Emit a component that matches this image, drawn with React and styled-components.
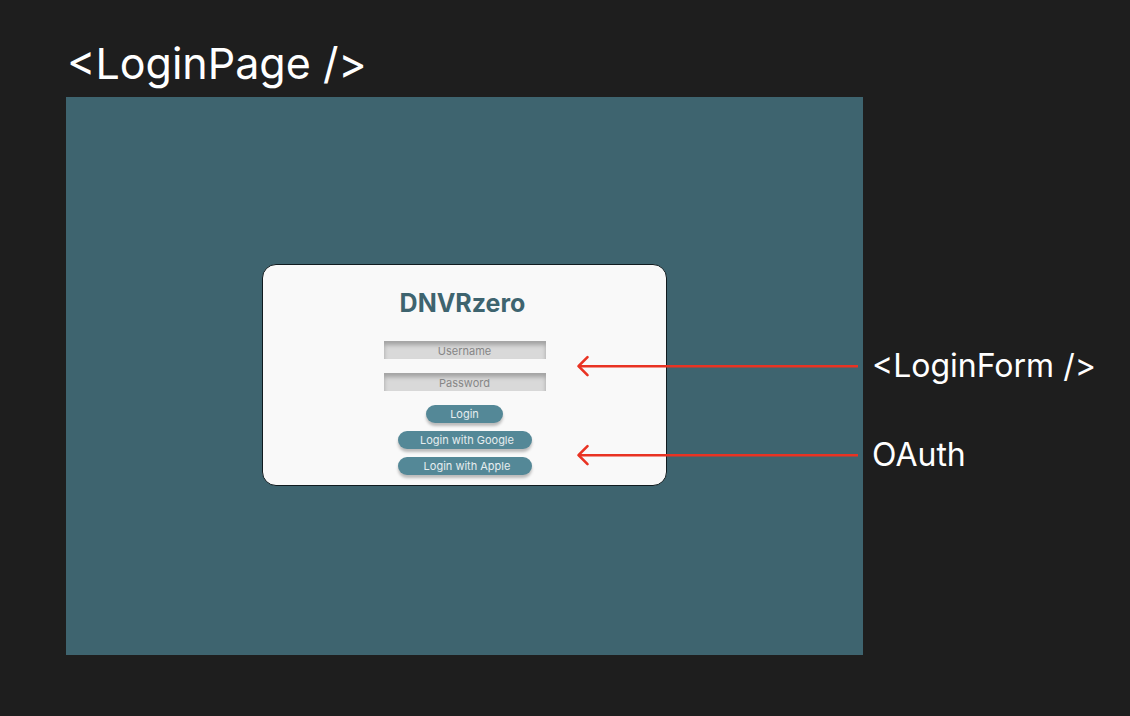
import React from "react";
import styled, { createGlobalStyle } from "styled-components";

const GlobalStyle = createGlobalStyle`
  *, *::before, *::after { box-sizing: border-box; }
  body {
    margin: 0;
    background: #1e1e1e;
    font-family: Inter, "Liberation Sans", sans-serif;
  }
`;

const Board = styled.main`
  min-height: 100vh;
  padding: 36px 0 60px 66px;
  color: #ffffff;
`;

const BoardTitle = styled.h1`
  margin: 0;
  height: 61px;
  padding-left: 1px;
  font-size: 43px;
  line-height: 55px;
  font-weight: 400;
  white-space: nowrap;
`;

const Columns = styled.div`
  display: grid;
  grid-template-columns: minmax(0, 1fr) 267px;
`;

const Frame = styled.section`
  display: flex;
  align-items: center;
  justify-content: center;
  min-height: 558px;
  padding-bottom: 2px;
  background: #3e646f;
`;

const Card = styled.div`
  display: flex;
  flex-direction: column;
  align-items: center;
  width: 405px;
  max-width: 100%;
  padding: 22px 0 10px;
  border: 1px solid #101b1f;
  border-radius: 14px;
  background: #f9f9f9;
`;

const Brand = styled.h2`
  margin: 0 0 22px;
  padding-right: 4px;
  color: #3e646f;
  font-size: 25px;
  line-height: 32px;
  font-weight: 700;
`;

const Form = styled.form`
  display: flex;
  flex-direction: column;
  align-items: center;
  gap: 14px;
`;

const Field = styled.input`
  width: 162px;
  height: 18px;
  padding: 1px 0 0;
  border: 0;
  background: #d9d9d9;
  box-shadow: inset 0 4px 4px rgba(0, 0, 0, 0.25);
  color: #555555;
  font-family: inherit;
  font-size: 11px;
  text-align: center;

  &::placeholder {
    color: #868686;
    opacity: 1;
  }
`;

const PillButton = styled.button`
  width: ${({ $wide }) => ($wide ? "134px" : "77px")};
  height: 18px;
  padding: 0 0 0 ${({ $wide }) => ($wide ? "5px" : "0")};
  border: 0;
  border-radius: 9px;
  background: #548897;
  box-shadow: 0 3px 3px rgba(0, 0, 0, 0.25);
  color: #e6edef;
  font-family: inherit;
  font-size: 11px;
  line-height: 18px;
  text-align: center;
  white-space: nowrap;
  cursor: pointer;
`;

const OAuthGroup = styled.div`
  display: flex;
  flex-direction: column;
  gap: 8px;
  margin-top: 8px;
`;

const Notes = styled.aside`
  display: flex;
  flex-direction: column;
  justify-content: center;
  gap: 49px;
  padding: 68px 0 0 9px;
`;

const Note = styled.p`
  position: relative;
  margin: 0;
  font-size: 32px;
  line-height: 40px;
  white-space: nowrap;
`;

const Arrow = styled.svg`
  position: absolute;
  top: 9px;
  right: 100%;
  width: 282px;
  height: 22px;
  margin-right: 13px;
  overflow: visible;
`;

function Annotation({ children }) {
  return (
    <Note>
      <Arrow viewBox="0 0 282 22" fill="none" stroke="#e93323" aria-hidden="true">
        <path d="M1.5 11.2H281" strokeWidth="2.6" />
        <path d="M10.5 2.2L1.5 11.2L10.5 20.2" strokeWidth="2.6" strokeLinecap="round" strokeLinejoin="round" />
      </Arrow>
      {children}
    </Note>
  );
}

export default function App() {
  return (
    <>
      <GlobalStyle />
      <Board>
        <BoardTitle>{"<LoginPage />"}</BoardTitle>
        <Columns>
          <Frame>
            <Card>
              <Brand>DNVRzero</Brand>
              <Form onSubmit={(event) => event.preventDefault()}>
                <Field type="text" placeholder="Username" aria-label="Username" />
                <Field type="password" placeholder="Password" aria-label="Password" />
                <PillButton type="submit">Login</PillButton>
              </Form>
              <OAuthGroup>
                <PillButton type="button" $wide>Login with Google</PillButton>
                <PillButton type="button" $wide>Login with Apple</PillButton>
              </OAuthGroup>
            </Card>
          </Frame>
          <Notes>
            <Annotation>{"<LoginForm />"}</Annotation>
            <Annotation>OAuth</Annotation>
          </Notes>
        </Columns>
      </Board>
    </>
  );
}
